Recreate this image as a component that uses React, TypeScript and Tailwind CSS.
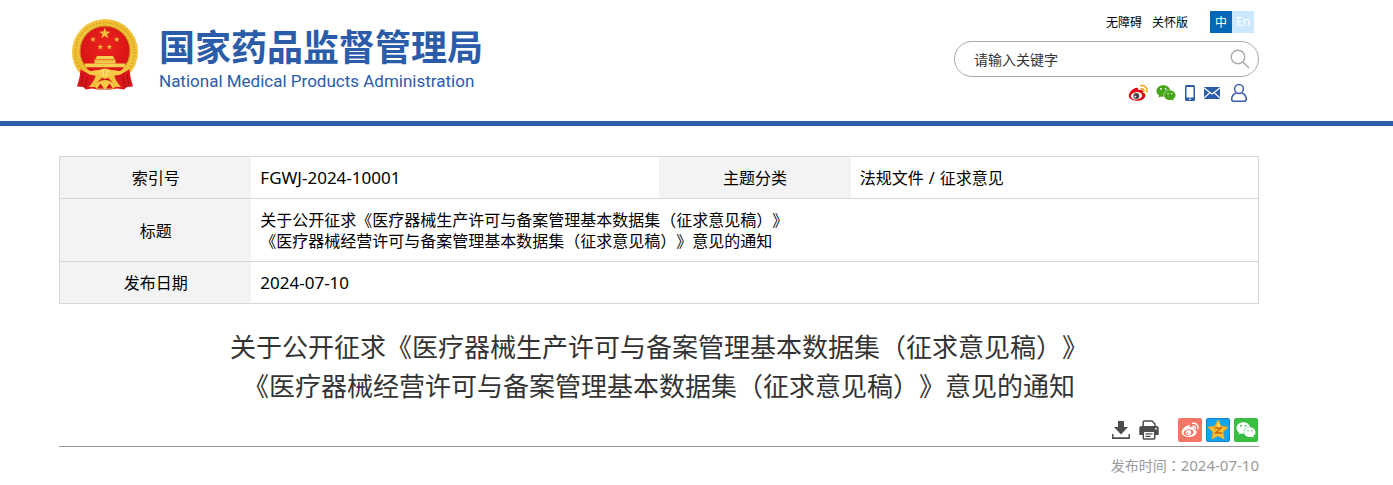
import React, { useState } from 'react';
import { FaWeixin } from 'react-icons/fa';

const META = {
  index: 'FGWJ-2024-10001',
  category: ['法规文件', '征求意见'],
  date: '2024-07-10',
};

const TITLE = [
  '关于公开征求《医疗器械生产许可与备案管理基本数据集（征求意见稿）》',
  '《医疗器械经营许可与备案管理基本数据集（征求意见稿）》意见的通知',
].join('\n');

function starPoints(cx: number, cy: number, r: number, inner = 0.4) {
  return Array.from({ length: 10 }, (_, i) => {
    const rad = i % 2 === 0 ? r : r * inner;
    const a = (Math.PI / 5) * i - Math.PI / 2;
    return `${cx + rad * Math.cos(a)},${cy + rad * Math.sin(a)}`;
  }).join(' ');
}

function Emblem() {
  return (
    <svg width="66" height="71" viewBox="0 0 66 71" aria-hidden="true" className="shrink-0">
      <defs>
        <radialGradient id="disc" cx="50%" cy="40%" r="60%">
          <stop offset="0" stopColor="#ea241c" />
          <stop offset="1" stopColor="#d81216" />
        </radialGradient>
        <linearGradient id="gold" x1="0" y1="0" x2="1" y2="1">
          <stop offset="0" stopColor="#f5cb45" />
          <stop offset="0.5" stopColor="#ecbb30" />
          <stop offset="1" stopColor="#f5cb45" />
        </linearGradient>
      </defs>
      {/* 麦穗外环 */}
      <circle cx="33" cy="33" r="33" fill="url(#gold)" />
      <circle cx="33" cy="33" r="29.500" fill="none" stroke="#e0a824" strokeWidth="2" strokeDasharray="2 1.500" />
      <circle cx="33" cy="32" r="25" fill="url(#disc)" stroke="#c98d18" strokeWidth="1" />
      {/* 五星 */}
      <g fill="#f3bd3a">
        <polygon points={starPoints(32.8, 14.5, 6)} />
        <polygon points={starPoints(21, 20.5, 3)} />
        <polygon points={starPoints(44.8, 20.5, 3)} />
        <polygon points={starPoints(28.3, 28, 3)} />
        <polygon points={starPoints(37.4, 28, 3)} />
      </g>
      {/* 天安门 */}
      <g fill="#f7d04d">
        <path d="M25 37h16l1.500 3h-19z" />
        <path d="M22.500 40.500h21V44.500h-21z" />
        <path d="M12.500 44.500h41l-1 4h-39z" />
      </g>
      <path d="M23 42h20" stroke="#dc9d20" strokeWidth="0.700" />
      <path d="M14 48.500h38c-5 5-11 8-19 8s-14-3-19-8z" fill="#dc181b" />
      {/* 绶带 */}
      <path d="M8.500 50.500c4 2 7 4.500 12 4.500l12.500 5 12.500-5c5 0 8-2.500 12-4.500l1 8 2.500 9-6 .5-3 2.500-7-1-6 1H26l-6-1-6 1-3-2.500-6-.5 2.500-9z" fill="#d9161b" />
      <path d="M11 55l-1.500 11M15 58l-2 10M55 55l1.500 11M51 58l2 10" stroke="#a90e12" strokeWidth="1.200" />
      <path d="M12 50c5 4 9 1 14 1 3 0 4-1.500 7-1.500s4 1.500 7 1.500c5 0 9 3 14-1-3 6-8 6.500-12 6.500-3 0-5 2.500-9 2.500s-6-2.500-9-2.500c-4 0-9-.5-12-6.500z" fill="#f5c944" />
      <path d="M24 55c-1 6-4 9-7 13h6c2-4 4-7 7-9zM42 55c1 6 4 9 7 13h-6c-2-4-4-7-7-9z" fill="#f2c33c" />
      <path d="M23 68c1-4 5-7 10-7s9 3 10 7l-2 2H25z" fill="#f5cb48" />
      <path d="M25 69.500l3.500-5 3.500 5zM34 69.500l3.500-5 3.500 5z" fill="#d9161b" />
      <path d="M27.500 53c2-3 9-3 11 0l-2 4h-7z" fill="#fadb66" />
      <path d="M30 56l-1-3M33 56v-4M36 56l1-3" stroke="#dc9d20" strokeWidth="0.700" />
    </svg>
  );
}

function WeiboIcon({ size, body, signal, eye, pupil }: {
  size: number; body: string; signal: string; eye: string; pupil: string;
}) {
  return (
    <svg width={size} height={size} viewBox="0 0 20 20" aria-hidden="true">
      <path d="M8.300 4.800C5.500 5.200 0.800 9.100 0.800 12.600c0 3.300 3.900 5.200 7.900 5.200 5 0 8.600-2.700 8.600-5.400 0-1.500-1-2.500-2.600-2.900.6-1.700.3-3.700-4.500-2.300.4-1.500-.1-2.600-1.900-2.400z" fill={body} />
      <ellipse cx="8.500" cy="12.800" rx="5.700" ry="3.700" transform="rotate(-8 8.500 12.800)" fill={eye} />
      <circle cx="8.300" cy="12.900" r="3" fill={pupil} />
      <circle cx="7.300" cy="13.600" r="0.900" fill={eye} />
      <path d="M12.700 2.700c3.700-.9 7.100 2.200 6.100 6.100M13.300 5.700c1.700-.3 3 .9 2.700 2.500" fill="none" stroke={signal} strokeWidth="1.500" strokeLinecap="round" />
    </svg>
  );
}

function PhoneIcon() {
  return (
    <svg width="12" height="18" viewBox="0 0 12 18" aria-hidden="true">
      <rect x="1" y="1" width="10" height="16" rx="1.500" fill="#2a5caa" />
      <rect x="2.500" y="3" width="7" height="10.500" fill="#fff" />
      <rect x="5" y="14.600" width="2" height="1.200" fill="#fff" />
    </svg>
  );
}

function MailIcon() {
  return (
    <svg width="16" height="12" viewBox="0 0 16 12" aria-hidden="true">
      <rect width="16" height="12" rx="0.500" fill="#2a5caa" />
      <path d="M0 1l8 6 8-6M0 11l5.500-5M16 11l-5.500-5" fill="none" stroke="#fff" strokeWidth="1.200" />
    </svg>
  );
}

function UserIcon() {
  return (
    <svg width="20" height="20" viewBox="0 0 20 20" fill="none" stroke="#3b5cae" strokeWidth="1.500" aria-hidden="true">
      <circle cx="11" cy="6" r="4.400" />
      <path d="M7.800 10.300C5.300 11.300 3.700 13.500 3.700 16.300c0 1.300.6 1.900 1.900 1.900h10.800c1.300 0 1.900-.6 1.900-1.900 0-2.800-1.600-5-4.100-6" />
    </svg>
  );
}

function DownloadIcon() {
  return (
    <svg width="20" height="20" viewBox="0 0 20 20" fill="#4d4d4d" aria-hidden="true">
      <path d="M7 1h6v6h4l-7 7.500L3 7h4z" />
      <path d="M1 14h1.500v3.200h15V14H19v5H1z" />
    </svg>
  );
}

function PrintIcon() {
  return (
    <svg width="20" height="20" viewBox="0 0 20 20" aria-hidden="true">
      <path d="M4.200 6V2.300C4.200 1.500 4.600 1 5.400 1H13l3 3v2" fill="#fff" stroke="#4d4d4d" strokeWidth="1.500" />
      <path d="M2.500 6h15c1.300 0 2.200.9 2.200 2.200V15H16v-3H4v3H.3V8.200C.3 6.900 1.200 6 2.500 6z" fill="#4d4d4d" />
      <rect x="4.300" y="11.200" width="11.400" height="7.800" rx="0.800" fill="#fff" stroke="#4d4d4d" strokeWidth="1.500" />
      <path d="M6.500 13.800h7M6.500 16.300h5" stroke="#4d4d4d" strokeWidth="1.200" />
      <circle cx="17" cy="8.700" r="0.900" fill="#fff" />
    </svg>
  );
}

function QzoneIcon() {
  return (
    <svg width="22" height="22" viewBox="0 0 22 22" aria-hidden="true">
      <polygon points={starPoints(11, 11.5, 10.5, 0.5)} fill="#fdbf2e" stroke="#f5a51c" strokeWidth="0.800" strokeLinejoin="round" />
      <path d="M11 2l2.500 6L11 12z" fill="#ffe07a" />
      <path d="M7.500 9h6.500L8.500 14h6.500" fill="none" stroke="#c8640a" strokeWidth="1.400" />
    </svg>
  );
}

function SiteHeader() {
  const [keyword, setKeyword] = useState('');

  return (
    <header className="border-b-5 border-[#2a5caa] pl-[59px] pr-[134px]">
      <div className="flex h-[121px] w-full max-w-[1200px] items-start justify-between">
        <a href="#" className="flex gap-[21px] pl-[13px] pt-[19px] text-[#2a5caa]">
          <Emblem />
          <span className="flex flex-col gap-1 pt-[6px]">
            <span className="text-[36px] leading-10 font-bold whitespace-nowrap">国家药品监督管理局</span>
            <span className="font-[Roboto] text-[17px] leading-6 whitespace-nowrap">
              National Medical Products Administration
            </span>
          </span>
        </a>

        <div className="flex w-[305px] flex-col pt-[11px]">
          <div className="flex items-center justify-end pr-[5px] text-xs text-black">
            <a href="#" className="mr-[10px]">无障碍</a>
            <a href="#" className="mr-[22px]">关怀版</a>
            <a href="#" className="size-[22px] bg-[#0068b7] text-center leading-[22px] text-white">中</a>
            <a href="#" className="size-[22px] bg-[#cce8ff] text-center font-['Noto_Sans'] leading-[22px] text-white">En</a>
          </div>

          <form className="mt-2 flex h-9 items-center rounded-full border border-[#aaa] pl-[19px] pr-2" onSubmit={(e) => e.preventDefault()}>
            <input
              type="text"
              aria-label="搜索"
              placeholder="请输入关键字"
              value={keyword}
              onChange={(e) => setKeyword(e.target.value)}
              className="min-w-0 flex-1 bg-transparent text-sm text-[#333] outline-none placeholder:text-[#333]"
            />
            <button type="submit" aria-label="搜索">
              <svg width="20" height="20" viewBox="0 0 20 20" fill="none" stroke="#aaa" strokeWidth="1.400" aria-hidden="true">
                <circle cx="8" cy="8" r="6.800" />
                <path d="M13 13l6 6" />
              </svg>
            </button>
          </form>

          <div className="mt-[6px] flex h-5 items-center justify-end gap-2 pr-[11px]">
            <a href="#" aria-label="微博"><WeiboIcon size={20} body="#e3000f" signal="#f0a30a" eye="#fff" pupil="#4a4a4a" /></a>
            <a href="#" aria-label="微信"><FaWeixin size={20} color="#47a51a" /></a>
            <a href="#" aria-label="手机版"><PhoneIcon /></a>
            <a href="#" aria-label="邮箱"><MailIcon /></a>
            <a href="#" aria-label="个人中心"><UserIcon /></a>
          </div>
        </div>
      </div>
    </header>
  );
}

function MetaTable() {
  const th = 'border-y border-[#d7d7d7] bg-[#f3f3f3] font-normal';
  const td = 'border-y border-[#d7d7d7] px-[9px] py-[10px]';

  return (
    <table className="w-full table-fixed border-collapse border border-[#d7d7d7] text-base leading-[21px] text-black">
      <colgroup>
        <col className="w-[16%]" />
        <col className="w-[34%]" />
        <col className="w-[16%]" />
        <col className="w-[34%]" />
      </colgroup>
      <tbody>
        <tr>
          <th scope="row" className={th}>索引号</th>
          <td className={td}><span className="font-['Noto_Sans'] text-[17px]">{META.index}</span></td>
          <th scope="row" className={th}>主题分类</th>
          <td className={td}>
            {META.category[0]}
            <span className="px-[5px] font-['Noto_Sans'] leading-none">/</span>
            {META.category[1]}
          </td>
        </tr>
        <tr>
          <th scope="row" className={th}>标题</th>
          <td colSpan={3} className={`${td} whitespace-pre-line`}>{TITLE}</td>
        </tr>
        <tr>
          <th scope="row" className={th}>发布日期</th>
          <td colSpan={3} className={td}><span className="font-['Noto_Sans'] text-[17px]">{META.date}</span></td>
        </tr>
      </tbody>
    </table>
  );
}

export default function App() {
  return (
    <div lang="zh-CN" className="min-h-screen bg-white font-['Noto_Sans_CJK_SC',sans-serif] [text-spacing-trim:space-all]">
      <SiteHeader />

      <main className="pl-[59px] pr-[134px] pt-[30px]">
        <div className="w-full max-w-[1200px]">
          <MetaTable />

          <h1 className="mt-[22px] text-center text-[26px] leading-[39px] whitespace-pre-line text-[#333]">{TITLE}</h1>

          <div className="mt-[14px] flex items-center justify-end border-b border-[#999] pr-px pb-1">
            <button type="button" aria-label="下载" className="mr-2"><DownloadIcon /></button>
            <button type="button" aria-label="打印" className="mr-[19px]"><PrintIcon /></button>
            <div className="flex gap-1">
              <a href="#" aria-label="分享到微博" className="flex size-6 items-center justify-center rounded-xs bg-[#f57567]">
                <WeiboIcon size={18} body="#fff" signal="#fff" eye="#f57567" pupil="#fff" />
              </a>
              <a href="#" aria-label="分享到QQ空间" className="flex size-6 items-center justify-center rounded-xs border border-[#1c7fc4] bg-[#0fa5f2]">
                <QzoneIcon />
              </a>
              <a href="#" aria-label="分享到微信" className="flex size-6 items-center justify-center rounded-xs bg-[#38bf43]">
                <FaWeixin size={20} color="#fff" />
              </a>
            </div>
          </div>

          <p className="pt-2 text-right text-sm leading-5 text-[#999]">
            发布时间<span lang="zh-TW" className="font-['Noto_Sans_CJK_TC']">：</span>
            <span className="font-['Noto_Sans'] text-[15px]">{META.date}</span>
          </p>
        </div>
      </main>
    </div>
  );
}
